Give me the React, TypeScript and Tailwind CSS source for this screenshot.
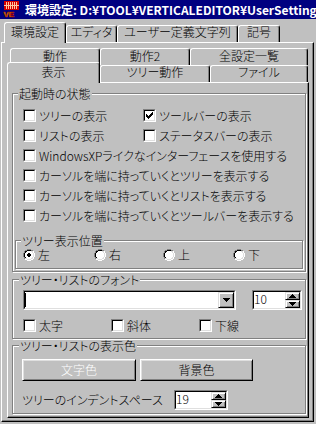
import React from "react";

function CheckBox({ checked = false }: { checked?: boolean }) {
  return (
    <div className="w-[13px] h-[13px] shrink-0 border border-t-[#808080] border-l-[#808080] border-r-white border-b-white">
      <div className="w-[11px] h-[11px] border border-t-black border-l-black border-r-[#dfdfdf] border-b-[#dfdfdf] bg-white">
        {checked && (
          <svg width="9" height="9" viewBox="0 0 9 9" shapeRendering="crispEdges" className="block">
            <path d="M1 3h1v3H1zM2 4h1v3H2zM3 5h1v3H3zM4 4h1v3H4zM5 3h1v3H5zM6 2h1v3H6zM7 1h1v3H7z" fill="#000" />
          </svg>
        )}
      </div>
    </div>
  );
}

function CheckItem({ label, checked = false }: { label: string; checked?: boolean }) {
  return (
    <div className="flex items-center h-[13px]">
      <CheckBox checked={checked} />
      <span className="ml-[3px] leading-[13px] whitespace-nowrap">{label}</span>
    </div>
  );
}

const RADIO_MAP = [
  "....GGGG....",
  "..GGKKKKGG..",
  ".GKKWWWWLLH.",
  ".GKWWWWWWLH.",
  "GKWWWWWWWWLH",
  "GKWWWWWWWWLH",
  "GKWWWWWWWWLH",
  "GKWWWWWWWWLH",
  ".GKWWWWWWLH.",
  ".GLLWWWWLLH.",
  "..HHLLLLHH..",
  "....HHHH....",
];
const RADIO_COL: Record<string, string> = {
  G: "#808080",
  K: "#000000",
  W: "#ffffff",
  L: "#dfdfdf",
  H: "#ffffff",
};

function Radio({ checked = false }: { checked?: boolean }) {
  const rects: React.ReactNode[] = [];
  RADIO_MAP.forEach((row, y) => {
    row.split("").forEach((c, x) => {
      if (c !== ".") rects.push(<rect key={`${x}-${y}`} x={x} y={y} width="1" height="1" fill={RADIO_COL[c]} />);
    });
  });
  return (
    <svg width="12" height="12" viewBox="0 0 12 12" shapeRendering="crispEdges" className="block shrink-0">
      {rects}
      {checked && <path d="M5 4h2v1H5zM4 5h4v2H4zM5 7h2v1H5z" fill="#000" />}
    </svg>
  );
}

function RadioItem({ label, checked = false }: { label: string; checked?: boolean }) {
  return (
    <div className="flex items-center h-[12px]">
      <Radio checked={checked} />
      <span className="ml-[3px] leading-[12px] whitespace-nowrap">{label}</span>
    </div>
  );
}

function Tri({ up = false }: { up?: boolean }) {
  return (
    <svg width="7" height="4" viewBox="0 0 7 4" shapeRendering="crispEdges" className="block">
      <path
        d={up ? "M3 0h1v1H3zM2 1h3v1H2zM1 2h5v1H1zM0 3h7v1H0z" : "M0 0h7v1H0zM1 1h5v1H1zM2 2h3v1H2zM3 3h1v1H3z"}
        fill="#000"
      />
    </svg>
  );
}

function SpinBox({ value, outer }: { value: string; outer: string }) {
  return (
    <div className={`border border-t-[#808080] border-l-[#808080] border-r-white border-b-white ${outer}`}>
      <div className="flex h-full border border-t-black border-l-black border-r-[#dfdfdf] border-b-[#dfdfdf] bg-white">
        <span className="flex-1 leading-[14px]">{value}</span>
        <div className="flex flex-col w-[15px]">
          <div className="h-[8px] flex items-center justify-center border border-t-[#dfdfdf] border-l-[#dfdfdf] border-r-black border-b-black shadow-[inset_1px_1px_0_#fff,inset_-1px_-1px_0_#808080] bg-[#c0c0c0]">
            <Tri up />
          </div>
          <div className="flex-1 flex items-center justify-center border border-t-[#dfdfdf] border-l-[#dfdfdf] border-r-black border-b-black shadow-[inset_1px_1px_0_#fff,inset_-1px_-1px_0_#808080] bg-[#c0c0c0]">
            <Tri />
          </div>
        </div>
      </div>
    </div>
  );
}

function Group({
  label,
  box,
  labelPos,
  children,
}: {
  label: string;
  box: string;
  labelPos: string;
  children?: React.ReactNode;
}) {
  return (
    <div className={`relative border border-[#808080] shadow-[inset_1px_1px_0_#fff,1px_1px_0_#fff] ${box}`}>
      <div className={`absolute -top-[6px] px-[1px] bg-[#c0c0c0] leading-[12px] whitespace-nowrap ${labelPos}`}>{label}</div>
      {children}
    </div>
  );
}

const tabBase =
  "flex justify-center whitespace-nowrap leading-[12px] bg-[#c0c0c0] border-l border-t border-r border-l-white border-t-white border-r-black rounded-t-[3px] shadow-[inset_-1px_0_0_#808080]";

function Icon() {
  return (
    <svg width="16" height="17" viewBox="0 0 16 17" className="ml-[3px] shrink-0 block" shapeRendering="crispEdges">
      <rect x="1" y="0" width="15" height="9" fill="#d40000" />
      <path d="M3 1h1v7H3zM5 1h1v7H5zM7 1h1v7H7zM9 1h1v7H9zM11 1h1v7h-1zM13 1h1v7h-1z" fill="#ffc8a0" />
      <rect x="1" y="4" width="15" height="1" fill="#ffc8a0" />
      <text
        x="0.5"
        y="15.5"
        fontSize="8"
        fontWeight="bold"
        fontFamily="'Liberation Sans', sans-serif"
        fill="#ffff00"
        stroke="#a00000"
        strokeWidth="0.6"
      >
        VE
      </text>
    </svg>
  );
}

export default function App() {
  return (
    <div className="w-[316px] h-[424px] overflow-hidden bg-[#c0c0c0] text-black text-[12px] leading-[14px] font-light font-['Noto_Sans_CJK_JP','Noto_Sans',sans-serif] [font-feature-settings:'palt']">
      {/* Title bar */}
      <div className="h-[19px] bg-[#000080] flex items-center">
        <Icon />
        <span className="ml-[6px] text-white font-bold whitespace-nowrap leading-[14px]">
          環境設定: D:¥TOOL¥VERTICALEDITOR¥UserSetting
        </span>
      </div>

      {/* Outer tabs */}
      <div className="mt-[3px] flex items-end h-[20px] pl-[4px]">
        <div className={`${tabBase} relative z-10 -mb-px h-[21px] w-[62px] pt-[3px]`}>環境設定</div>
        <div className={`${tabBase} h-[17px] w-[51px]`}>エディタ</div>
        <div className={`${tabBase} h-[17px] w-[121px]`}>ユーザー定義文字列</div>
        <div className={`${tabBase} h-[17px] w-[42px]`}>記号</div>
      </div>

      {/* Outer page */}
      <div className="ml-[1px] w-[313px] h-[380px] border border-t-white border-l-white border-r-black border-b-black shadow-[inset_-1px_-1px_0_#808080] pt-[5px] pl-[5px]">
        {/* inner tabs back row */}
        <div className="flex h-[17px] ml-[3px]">
          <div className={`${tabBase} h-[17px] w-[90px] pt-[1px]`}>動作</div>
          <div className={`${tabBase} h-[17px] w-[90px] pt-[1px]`}>動作2</div>
          <div className={`${tabBase} h-[17px] w-[118px] pt-[1px]`}>全設定一覧</div>
        </div>
        {/* inner tabs front row */}
        <div className="flex items-end h-[17px]">
          <div className={`${tabBase} relative z-10 -mb-px h-[21px] w-[93px] pt-[3px]`}>表示</div>
          <div className={`${tabBase} h-[17px] w-[110px]`}>ツリー動作</div>
          <div className={`${tabBase} h-[17px] w-[98px]`}>ファイル</div>
        </div>

        {/* Inner page */}
        <div className="w-[302px] h-[336px] border border-t-white border-l-white border-r-black border-b-black shadow-[inset_-1px_-1px_0_#808080] pt-[10px] pl-[4px]">
          <Group label="起動時の状態" box="w-[294px] h-[179px]" labelPos="left-[5px]">
            <div className="pt-[15px] pl-[10px] flex flex-col">
              <div className="flex h-[20px]">
                <div className="w-[120px]">
                  <CheckItem label="ツリーの表示" />
                </div>
                <CheckItem label="ツールバーの表示" checked />
              </div>
              <div className="flex h-[20px]">
                <div className="w-[120px]">
                  <CheckItem label="リストの表示" />
                </div>
                <CheckItem label="ステータスバーの表示" />
              </div>
              <div className="h-[20px]">
                <CheckItem label="WindowsXPライクなインターフェースを使用する" />
              </div>
              <div className="h-[20px]">
                <CheckItem label="カーソルを端に持っていくとツリーを表示する" />
              </div>
              <div className="h-[20px]">
                <CheckItem label="カーソルを端に持っていくとリストを表示する" />
              </div>
              <div className="h-[20px]">
                <CheckItem label="カーソルを端に持っていくとツールバーを表示する" />
              </div>
            </div>
            <div className="mt-[11px] ml-[2px]">
              <Group label="ツリー表示位置" box="w-[288px] h-[29px]" labelPos="left-[5px]">
                <div className="pt-[8px] pl-[7px] flex">
                  <div className="w-[71px]">
                    <RadioItem label="左" checked />
                  </div>
                  <div className="w-[69px]">
                    <RadioItem label="右" />
                  </div>
                  <div className="w-[70px]">
                    <RadioItem label="上" />
                  </div>
                  <RadioItem label="下" />
                </div>
              </Group>
            </div>
          </Group>

          <div className="mt-[7px]">
            <Group label="ツリー・リストのフォント" box="w-[294px] h-[60px]" labelPos="left-[6px]">
              <div className="pt-[10px] pl-[10px]">
                <div className="flex">
                  <div className="w-[213px] h-[20px] border border-t-[#808080] border-l-[#808080] border-r-white border-b-white">
                    <div className="flex h-full border border-t-black border-l-black border-r-[#dfdfdf] border-b-[#dfdfdf] bg-white">
                      <div className="flex-1">
                        <div className="w-px h-[14px] mt-px bg-black" />
                      </div>
                      <div className="w-[16px] h-[16px] flex items-center justify-center border border-t-[#dfdfdf] border-l-[#dfdfdf] border-r-black border-b-black shadow-[inset_1px_1px_0_#fff,inset_-1px_-1px_0_#808080] bg-[#c0c0c0]">
                        <Tri />
                      </div>
                    </div>
                  </div>
                  <div className="ml-[16px]">
                    <SpinBox value="10" outer="w-[50px] h-[20px]" />
                  </div>
                </div>
                <div className="mt-[9px] flex">
                  <div className="w-[88px]">
                    <CheckItem label="太字" />
                  </div>
                  <div className="w-[88px]">
                    <CheckItem label="斜体" />
                  </div>
                  <CheckItem label="下線" />
                </div>
              </div>
            </Group>
          </div>

          <div className="mt-[6px]">
            <Group label="ツリー・リストの表示色" box="w-[294px] h-[69px]" labelPos="left-[6px]">
              <div className="pt-[13px] pl-[9px]">
                <div className="flex">
                  <div className="w-[114px] h-[22px] flex items-center justify-center text-white border border-t-white border-l-white border-r-black border-b-black shadow-[inset_1px_1px_0_#dfdfdf,inset_-1px_-1px_0_#808080]">
                    文字色
                  </div>
                  <div className="ml-[4px] w-[113px] h-[22px] flex items-center justify-center border border-t-white border-l-white border-r-black border-b-black shadow-[inset_1px_1px_0_#dfdfdf,inset_-1px_-1px_0_#808080]">
                    背景色
                  </div>
                </div>
                <div className="mt-[9px] flex items-center h-[20px]">
                  <div className="w-[152px] whitespace-nowrap">ツリーのインデントスペース</div>
                  <SpinBox value="19" outer="w-[54px] h-[20px]" />
                </div>
              </div>
            </Group>
          </div>
        </div>
      </div>
    </div>
  );
}
